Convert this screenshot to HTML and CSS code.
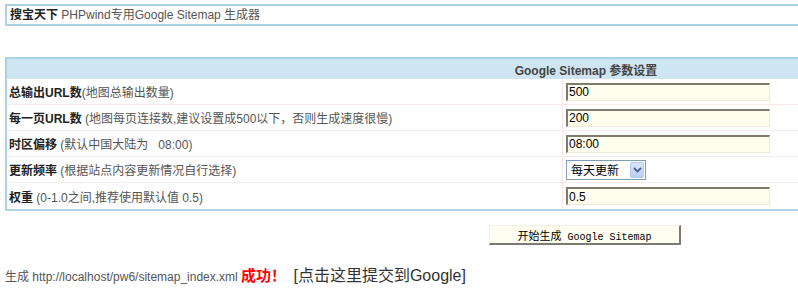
FILE: index.html
```html
<!DOCTYPE html>
<html lang="zh-CN">
<head>
    <meta charset="UTF-8">
    <title>PHPwind Google Sitemap 生成器</title>
    <link rel="stylesheet" href="styles.css">
</head>
<body>
<div class="wrap">
    <div class="topbar"><b>搜宝天下</b> PHPwind专用Google Sitemap 生成器</div>

    <table class="settings">
        <tr>
            <th colspan="2">Google Sitemap 参数设置</th>
        </tr>
        <tr>
            <td class="label"><b>总输出URL数</b>(地图总输出数量)</td>
            <td class="field"><input type="text" class="txt" value="500"></td>
        </tr>
        <tr>
            <td class="label"><b>每一页URL数</b> (地图每页连接数,建议设置成500以下，否则生成速度很慢)</td>
            <td class="field"><input type="text" class="txt" value="200"></td>
        </tr>
        <tr>
            <td class="label"><b>时区偏移</b> (默认中国大陆为&nbsp;&nbsp; 08:00)</td>
            <td class="field"><input type="text" class="txt" value="08:00"></td>
        </tr>
        <tr>
            <td class="label"><b>更新频率</b> (根据站点内容更新情况自行选择)</td>
            <td class="field">
                <span class="sel">
                    <select>
                        <option>每天更新</option>
                        <option>每周更新</option>
                        <option>每月更新</option>
                    </select>
                    <span class="sel-btn">
                        <svg width="9" height="6" viewBox="0 0 9 6"><path d="M1 1 L4.5 4.5 L8 1" fill="none" stroke="#4d6185" stroke-width="1.8"/></svg>
                    </span>
                </span>
            </td>
        </tr>
        <tr>
            <td class="label"><b>权重</b> (0-1.0之间,推荐使用默认值 0.5)</td>
            <td class="field"><input type="text" class="txt" value="0.5"></td>
        </tr>
    </table>

    <div class="actions">
        <button><span class="cn">开始生成</span> Google Sitemap</button>
    </div>

    <p class="result">
        生成 http://localhost/pw6/sitemap_index.xml
        <span class="ok">成功！</span>
        <a href="#" class="submit">[点击这里提交到Google]</a>
    </p>
</div>
</body>
</html>
```

FILE: styles.css
```css
html, body {
    overflow: hidden;
}
body {
    margin: 0;
    font-family: "Liberation Sans", "Noto Sans CJK SC", sans-serif;
    font-size: 12px;
    color: #555;
}
.wrap {
    width: 1160px;
    margin: 4px 5px;
}
.topbar {
    border: 2px solid #a9d2e3;
    height: 18px;
    line-height: 18px;
    padding-left: 3px;
    color: #555;
}
.topbar b {
    color: #222;
}

.settings {
    width: 100%;
    margin-top: 31px;
    border-collapse: collapse;
    border-top: 2px solid #a9d2e3;
    border-left: 2px solid #a9d2e3;
    border-bottom: 2px solid #b3d3e2;
}
.settings th {
    height: 20px;
    padding: 0;
    background: #cfe5f1;
    color: #444;
    font-weight: bold;
    text-align: center;
}
.settings td {
    height: 25px;
    padding: 0;
    border-bottom: 1px solid #fbeaea;
}
.settings tr:last-child td {
    border-bottom: none;
    height: 26px;
}
.label {
    width: 553px;
    padding-left: 2px !important;
    border-right: 1px solid #fbe4e4;
    color: #555;
}
.label b {
    color: #222;
}
.field {
    padding-left: 3px !important;
}
.txt {
    box-sizing: border-box;
    width: 204px;
    height: 18px;
    margin: 0;
    padding: 0 0 0 1px;
    background: #fffdee;
    border-top: 2px solid #7c7c6e;
    border-left: 2px solid #7c7c6e;
    border-right: 1px solid #ecebd8;
    border-bottom: 1px solid #ecebd8;
    font-family: "Liberation Sans", sans-serif;
    font-size: 12px;
    color: #000;
    vertical-align: middle;
}

.sel {
    position: relative;
    display: inline-block;
    vertical-align: middle;
}
.sel select {
    appearance: none;
    -webkit-appearance: none;
    box-sizing: border-box;
    width: 80px;
    height: 20px;
    margin: 0;
    padding: 0 0 0 4px;
    border: 1px solid #7f9db9;
    background: #fff;
    font-family: "Noto Sans CJK SC", sans-serif;
    font-size: 12px;
    color: #000;
    display: block;
}
.sel-btn {
    position: absolute;
    top: 2px;
    right: 2px;
    width: 14px;
    height: 16px;
    box-sizing: border-box;
    border: 1px solid #b7c9f0;
    border-radius: 2px;
    background: linear-gradient(#dce6fc, #b9cdf6);
    display: flex;
    align-items: center;
    justify-content: center;
}

.actions {
    margin-top: 14px;
    text-align: center;
}
.actions button {
    width: 192px;
    height: 20px;
    padding: 0;
    background: #fffef0;
    border-top: 1px solid #f2f2e6;
    border-left: 1px solid #f2f2e6;
    border-right: 2px solid #7a7a72;
    border-bottom: 2px solid #7a7a72;
    font-family: "Liberation Mono", monospace;
    font-size: 10px;
    color: #000;
    cursor: pointer;
}
.actions .cn {
    font-family: "Noto Sans CJK SC", sans-serif;
    font-size: 11px;
}

.result {
    margin: 17px 0 0;
    color: #555;
}
.ok {
    color: #f00;
    font-weight: bold;
    font-size: 15px;
    margin-right: 4px;
}
.submit {
    color: #333;
    font-size: 16px;
    text-decoration: none;
}
```
